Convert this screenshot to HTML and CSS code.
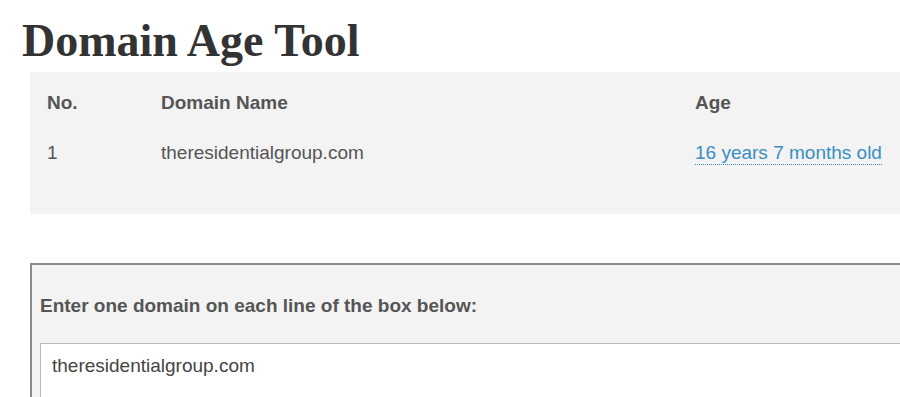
FILE: index.html
```html
<!DOCTYPE html>
<html lang="en">
    <head>
        <meta charset="UTF-8">
        <meta name="viewport" content="width=device-width, initial-scale=1.0">
        <title>Domain Age Tool</title>
        <link rel="stylesheet" href="styles.css">
    </head>
    <body>
        <div class="page">
            <h1 class="page-title">Domain Age Tool</h1>
            <div class="result-box">
                <table class="result-table">
                    <thead>
                        <tr>
                            <th class="col-no">No.</th>
                            <th class="col-name">Domain Name</th>
                            <th>Age</th>
                        </tr>
                    </thead>
                    <tbody>
                        <tr>
                            <td>1</td>
                            <td>theresidentialgroup.com</td>
                            <td><a class="age-link" href="#">16 years 7 months old</a></td>
                        </tr>
                    </tbody>
                </table>
            </div>
            <form class="input-box">
                <label class="input-label" for="domains">Enter one domain on each line of the box below:</label>
                <textarea id="domains" class="domain-input" rows="4">theresidentialgroup.com</textarea>
            </form>
        </div>
    </body>
</html>
```

FILE: styles.css
```css
body {
    margin: 0;
    padding: 0;
    background-color: #ffffff;
    color: #555555;
    font-family: "Liberation Sans", Arial, sans-serif;
    font-size: 19px;
    overflow: hidden;
}

.page {
    width: 1100px;
    padding-left: 30px;
}

.page-title {
    margin: 0 0 0 -8px;
    padding-top: 21px;
    height: 72px;
    box-sizing: border-box;
    font-family: "Liberation Serif", "Times New Roman", serif;
    font-size: 46px;
    line-height: 40px;
    font-weight: bold;
    color: #333333;
}

.result-box {
    background-color: #f3f3f3;
    padding: 6px 0 36px 17px;
}

.result-table {
    border-collapse: collapse;
    width: 100%;
}

.result-table th,
.result-table td {
    text-align: left;
    padding: 12px 0;
    line-height: 26px;
}

.result-table th {
    font-weight: bold;
}

.col-no {
    width: 114px;
}

.col-name {
    width: 534px;
}

.age-link {
    color: #3a8fc2;
    text-decoration: none;
    padding-bottom: 1px;
    border-bottom: 1px dotted #3a8fc2;
}

.input-box {
    margin: 49px 0 0;
    background-color: #f3f3f3;
    border-top: 2px solid #8c8c8c;
    border-left: 2px solid #8c8c8c;
    padding: 28px 0 0 8px;
    display: flex;
    flex-direction: column;
    gap: 24px;
}

.input-label {
    font-weight: bold;
    line-height: 26px;
}

.domain-input {
    font-family: "Liberation Sans", Arial, sans-serif;
    font-size: 19px;
    line-height: 26px;
    color: #444444;
    background-color: #ffffff;
    border: 1px solid #bbbbbb;
    padding: 9px 11px;
    resize: none;
    outline: none;
}
```
